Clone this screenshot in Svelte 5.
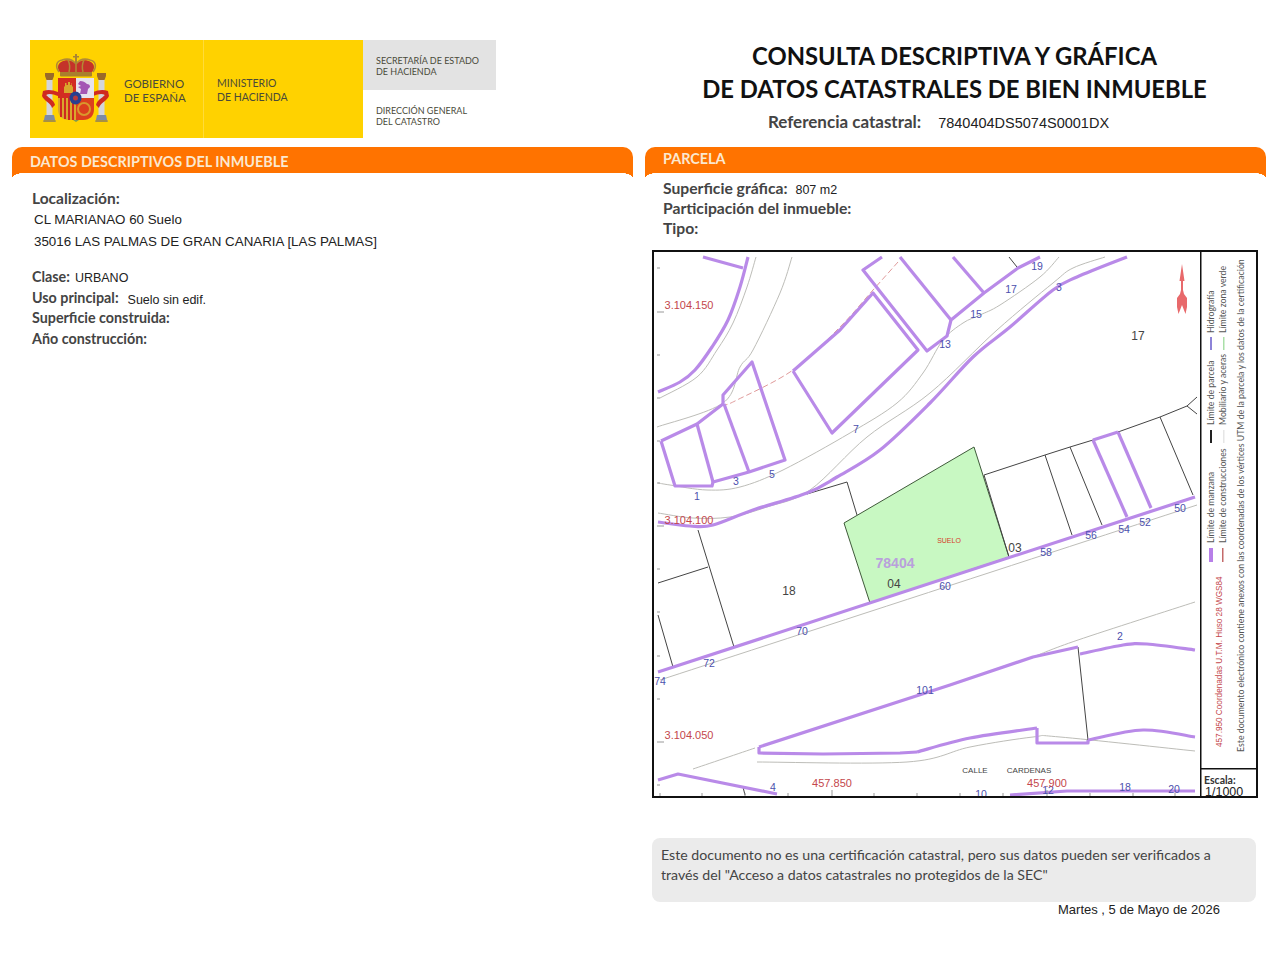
<script>
  const left = [
    { label: 'Clase:', value: 'URBANO', cls: 'clase' },
    { label: 'Uso principal:', value: 'Suelo sin edif.', cls: 'uso' },
    { label: 'Superficie construida:' },
    { label: 'Año construcción:' }
  ];

  // catmull-rom through the traced points, for roads and curved kerbs
  function smooth(str) {
    const p = str.split(' ').map((s) => s.split(',').map(Number));
    let d = `M${p[0][0]} ${p[0][1]}`;
    for (let i = 0; i < p.length - 1; i++) {
      const a = p[i - 1] || p[i];
      const b = p[i];
      const c = p[i + 1];
      const e = p[i + 2] || c;
      const c1x = b[0] + (c[0] - a[0]) / 6;
      const c1y = b[1] + (c[1] - a[1]) / 6;
      const c2x = c[0] - (e[0] - b[0]) / 6;
      const c2y = c[1] - (e[1] - b[1]) / 6;
      d += `C${c1x.toFixed(1)} ${c1y.toFixed(1)} ${c2x.toFixed(1)} ${c2y.toFixed(1)} ${c[0]} ${c[1]}`;
    }
    return d;
  }

  // map traced in page coordinates (the viewBox starts at the frame corner)
  const purple = [
    '703,257 743,268',
    '793,371 840,330 873,293 918,350 832,433 793,371',
    '882,257 863,270 927,351 947,336 951,320 984,293 1018,268 1040,257',
    '900,257 951,320',
    '953,257 984,293',
    '661,441 697,424 723,404 723,395 752,362 785,460 749,472 713,482 712,486 675,486 661,441',
    '697,424 713,482',
    '724,404 749,472',
    '658,672 1195,497',
    '1093,440 1127,517',
    '1118,432 1151,508',
    '1093,440 1118,432',
    '759,747 950,685 1033,657 1078,647',
    '759,747 759,753 823,754 900,753 917,752',
    '1037,728 1037,743 1088,743 1088,740',
    '658,780 678,774 777,794',
    '1010,795 1067,791 1195,791'
  ];
  const purpleCurves = [
    '748,257 740,287 728,320 712,347 695,370 680,382 658,392',
    '1127,257 1077,277 1053,290 1010,327 973,357 930,403 880,450 837,477 807,493 753,510 713,525 690,526 658,522',
    '1080,654 1123,645 1147,644 1195,650',
    '917,752 970,738 1037,728',
    '1088,740 1143,730 1195,737'
  ];
  const gray = [
    '756,257 747,287 733,323 717,350 697,377 660,398',
    '792,257 780,293 753,350 740,367 723,403 657,427',
    '1059,257 1040,277 1000,305 980,315 963,323 943,340 923,373 897,403 850,433 783,470 740,487 707,490 670,485 658,483',
    '1105,257 1073,268 1053,283 997,330 930,393 867,437 810,490 767,507 730,517 693,518 658,513',
    '660,680 1197,505',
    '693,769 755,748',
    '1033,657 1078,640 1195,602',
    '757,762 907,762 970,747 1033,737 1060,737 1195,751'
  ];
  const black = [
    '807,494 847,482 857,515',
    '1009,257 1017,267',
    '698,530 734,647',
    '708,567 658,583',
    '658,615 673,667',
    '1009,557 984,475 1045,455 1070,447 1093,440',
    '1118,432 1160,417 1187,406 1197,397',
    '1187,406 1197,414',
    '1045,455 1072,535',
    '1070,447 1102,525',
    '1160,417 1193,495',
    '1078,647 1088,740',
    '743,787 745,795'
  ];
  const parcel = '844,523 974,447 1009,557 870,603';

  const labels = [
    ['19', 1037, 270], ['17', 1011, 293], ['15', 976, 318], ['13', 945, 348], ['3', 1059, 291],
    ['7', 856, 433], ['5', 772, 478], ['3', 736, 485], ['1', 697, 500], ['60', 945, 590], ['58', 1046, 556],
    ['56', 1091, 539], ['54', 1124, 533], ['52', 1145, 526], ['50', 1180, 512], ['70', 802, 635],
    ['72', 709, 667], ['74', 660, 685], ['101', 925, 694], ['2', 1120, 640], ['4', 773, 791],
    ['10', 981, 798], ['12', 1048, 794], ['18', 1125, 791], ['20', 1174, 793]
  ];
  const numbers = [
    ['17', 1138, 340], ['18', 789, 595], ['04', 894, 588], ['03', 1015, 552]
  ];
  const coords = [
    ['3.104.150', 689, 309], ['3.104.100', 689, 524], ['3.104.050', 689, 739],
    ['457.850', 832, 787], ['457.900', 1047, 787]
  ];

  const yTicks = [268, 312, 355, 398, 441, 483, 526, 569, 612, 656, 699, 742, 785];
  const xTicks = [660, 702, 745, 788, 832, 874, 917, 960, 1003, 1047, 1090, 1133, 1175];
</script>

<div class="page">
  <header class="top">
    <div class="logo">
      <div class="yellow">
        <div class="gov">
          <svg class="arms" viewBox="0 5 100 98" width="100" height="98" aria-hidden="true">
            <!-- columns -->
            <rect x="16.500" y="44" width="6" height="36" fill="#d3d5dc" />
            <rect x="68.500" y="44" width="6" height="36" fill="#d3d5dc" />
            <path d="M15 38h9v3l-1.500 4h-6L15 41zM67 38h9v3l-1.500 4h-6L67 41z" fill="#9a6a2a" />
            <path d="M15 80h9l1.500 7h-12zM67 80h9l1.500 7h-12z" fill="#7d8ba6" />
            <path d="M13.500 85h12v2h-12zM65.500 85h12v2h-12z" fill="#a69045" />
            <!-- ribbons -->
            <path d="M13 56c5-2 10-1 15 1v4c-5-2-9-3-12-1 3 3 8 5 9 10l-3 3c-1-5-8-7-10-12z" fill="#cf2a20" />
            <path d="M78 56c-5-2-10-1-15 1v4c5-2 9-3 12-1-3 3-8 5-9 10l3 3c1-5 8-7 10-12z" fill="#cf2a20" />
            <!-- crown -->
            <path d="M31 38c-4-3-4-9 0-11 5-3 11-2 15 2 4-4 10-5 15-2 4 2 4 8 0 11z" fill="#c4332a" />
            <path d="M29 37c-4-5-3-11 3-12 6-2 11 0 14 4 3-4 8-6 14-4 6 1 7 7 3 12M38 25c2 4 2 8 1 12M54 25c-2 4-2 8-1 12M46 29v8" fill="none" stroke="#b28a35" stroke-width="1.500" />
            <path d="M45 19h2v2h2v1.500h-2v6h-2v-6h-2V21h2z" fill="#a88433" />
            <rect x="30" y="37" width="32" height="4.500" rx="1" fill="#a97f2c" />
            <!-- shield -->
            <path d="M28 43h18v20H28z" fill="#d22c22" />
            <path d="M46 43h18v20H46z" fill="#e6e3ee" />
            <path d="M28 63h18v22h-7c-7 0-11-4-11-11z" fill="#d9a72c" />
            <path d="M31 63v19M35 63v21M39 63v22M43 63v22" stroke="#cf2a20" stroke-width="2" />
            <path d="M46 63h18v11c0 7-4 11-11 11h-7z" fill="#dc3f1e" />
            <circle cx="54" cy="74" r="6" fill="none" stroke="#d9982c" stroke-width="2" />
            <path d="M34 58v-6l1-1v-3h1.500v2h1.500v-3h2v3h1.500v-2H42v3l1 1v6z" fill="#d9a72c" />
            <path d="M50 46c3 0 5 1 7 3 2 0 3 1 3 3l-2 2-1 5h-7l1-5-3-2 3-1-3-2z" fill="#a457b4" />
            <ellipse cx="45.500" cy="63" rx="6" ry="6.500" fill="#27408f" />
            <circle cx="45.500" cy="63" r="2.500" fill="#b8393c" />
            <path d="M43 85h6l-3 2z" fill="#7f9a52" />
          </svg>
          <p>GOBIERNO<br />DE ESPAÑA</p>
        </div>
        <div class="min">
          <p>MINISTERIO<br />DE HACIENDA</p>
        </div>
      </div>
      <div class="side">
        <p class="sec">SECRETARÍA DE ESTADO<br />DE HACIENDA</p>
        <p class="dir">DIRECCIÓN GENERAL<br />DEL CATASTRO</p>
      </div>
    </div>

    <div class="title">
      <h1>CONSULTA DESCRIPTIVA Y GRÁFICA<br />DE DATOS CATASTRALES DE BIEN INMUEBLE</h1>
      <div class="ref"><b>Referencia catastral:</b><span>7840404DS5074S0001DX</span></div>
    </div>
  </header>

  <div class="cols">
    <section class="col">
      <h2 class="band band-left">DATOS DESCRIPTIVOS DEL INMUEBLE</h2>
      <div class="loc">
        <b>Localización:</b>
        <span>CL MARIANAO 60 Suelo</span>
        <span>35016 LAS PALMAS DE GRAN CANARIA [LAS PALMAS]</span>
      </div>
      <div class="fields">
        {#each left as row}
          <div class="field">
            <b>{row.label}</b>
            {#if row.value}<span class={row.cls}>{row.value}</span>{/if}
          </div>
        {/each}
      </div>
    </section>

    <section class="col">
      <h2 class="band band-right">PARCELA</h2>
      <div class="parcel-info">
        <div class="field"><b>Superficie gráfica:</b><span class="sup">807 m2</span></div>
        <div class="field"><b>Participación del inmueble:</b></div>
        <div class="field"><b>Tipo:</b></div>
      </div>

      <svg class="map" viewBox="652 250 606 548" width="606" height="548" role="img" aria-label="Plano catastral">
        <polygon points={parcel} fill="#c8f8c2" stroke="#3f5a3a" stroke-width="1" />

        {#each gray as p}<path d={smooth(p)} class="gray" />{/each}
        <path d={smooth('898,262 873,290 840,327 793,370 737,400 725,405')} class="dash" />
        {#each black as p}<polyline points={p} class="black" />{/each}
        {#each purple as p}<polyline points={p} class="purple" />{/each}
        {#each purpleCurves as p}<path d={smooth(p)} class="purple" />{/each}

        {#each yTicks as y}<line x1="657" x2={y === 312 || y === 526 || y === 742 ? 664 : 660} y1={y} y2={y} class="tick" />{/each}
        {#each xTicks as x}<line x1={x} x2={x} y1={x === 832 || x === 1047 ? 790 : 793} y2="796" class="tick" />{/each}

        {#each labels as [t, x, y]}<text {x} {y} class="lbl">{t}</text>{/each}
        {#each numbers as [t, x, y]}<text {x} {y} class="num">{t}</text>{/each}
        {#each coords as [t, x, y]}<text {x} {y} class="coord">{t}</text>{/each}
        <text x="895" y="568" class="block">78404</text>
        <text x="949" y="543" class="suelo">SUELO</text>
        <text x="975" y="773" class="street">CALLE</text>
        <text x="1029" y="773" class="street">CARDENAS</text>

        <!-- north arrow -->
        <path d="M1182 264l2.500 17h-1.500v9l1 4 3 4v9l-1.500 7-3.500-9-3.500 9-1.500-7v-9l3-4 1-4v-9h-1.500z" fill="#e8696b" />

        <!-- legend -->
        <rect x="1200" y="251" width="1.500" height="545" fill="#111" />
        <rect x="1201" y="768" width="55" height="1.500" fill="#111" />
        <rect x="1209" y="548" width="4" height="14" fill="#b77fe8" />
        <rect x="1222" y="548" width="1.500" height="14" fill="#c46a6a" />
        <rect x="1210" y="430" width="2" height="13" fill="#222" />
        <rect x="1223" y="430" width="1.500" height="13" fill="#e6e6e6" />
        <rect x="1210" y="337" width="2" height="13" fill="#8d83d8" />
        <rect x="1223" y="337" width="1.500" height="13" fill="#a9dfa8" />
        <text transform="translate(1214 543) rotate(-90)" class="leg">Límite de manzana</text>
        <text transform="translate(1226 543) rotate(-90)" class="leg">Límite de construcciones</text>
        <text transform="translate(1214 425) rotate(-90)" class="leg">Límite de parcela</text>
        <text transform="translate(1226 425) rotate(-90)" class="leg">Mobiliario y aceras</text>
        <text transform="translate(1214 333) rotate(-90)" class="leg">Hidrografía</text>
        <text transform="translate(1226 333) rotate(-90)" class="leg">Límite zona verde</text>
        <text transform="translate(1222 747) rotate(-90)" class="utm">457.950  Coordenadas U.T.M. Huso 28 WGS84</text>
        <text transform="translate(1244 752) rotate(-90)" class="leg-long">Este documento electrónico contiene anexos con las coordenadas de los vértices UTM de la parcela y los datos de la certificación</text>
        <text x="1204" y="784" class="esc">Escala:</text>
        <text x="1205" y="796" class="scale">1/1000</text>

        <rect x="653" y="251" width="604" height="546" fill="none" stroke="#111" stroke-width="2" />
      </svg>

      <p class="note">Este documento no es una certificación catastral, pero sus datos pueden ser verificados a través del "Acceso a datos catastrales no protegidos de la SEC"</p>
      <p class="date">Martes , 5 de Mayo de 2026</p>
    </section>
  </div>
</div>

<style>
  :global(body) {
    margin: 0;
    background: #fff;
  }

  .page {
    width: 1280px;
    height: 960px;
    box-sizing: border-box;
    padding-top: 40px;
    overflow: hidden;
    font-family: Lato, "Liberation Sans", sans-serif;
    color: #444;
  }

  p, h1, h2 {
    margin: 0;
  }

  .top {
    display: grid;
    grid-template-columns: 633px 621px;
    gap: 12px;
    height: 107px;
  }

  .logo {
    display: flex;
    margin-left: 30px;
    height: 98px;
    color: #4a4a3a;
  }

  .yellow {
    display: flex;
    width: 333px;
    background: #ffd200;
  }

  .gov {
    display: flex;
    align-items: center;
    width: 174px;
    border-right: 1px solid #ffdb3a;
    box-sizing: border-box;
  }

  .arms {
    filter: blur(0.3px);
  }

  .gov p, .min p {
    font-size: 11.500px;
    line-height: 13.500px;
    margin-top: 3px;
  }

  .gov p {
    margin-left: -6px;
  }

  .min {
    display: flex;
    align-items: center;
    padding-left: 13px;
  }

  .min p {
    font-size: 10.500px;
  }

  .side {
    width: 133px;
    font-size: 9px;
    line-height: 11px;
  }

  .sec {
    height: 50px;
    box-sizing: border-box;
    padding: 15px 0 0 13px;
    background: #e3e3e3;
  }

  .dir {
    padding: 14.500px 0 0 13px;
  }

  .title {
    text-align: center;
    color: #111;
  }

  h1 {
    font-size: 23.800px;
    line-height: 33px;
    font-weight: 700;
    margin-right: 2px;
  }

  .ref {
    display: flex;
    justify-content: center;
    gap: 17px;
    align-items: baseline;
    margin: 5px 34px 0 0;
    color: #444;
  }

  .ref b {
    font-size: 17px;
  }

  .ref span {
    font-family: "Liberation Sans", sans-serif;
    font-size: 14.500px;
    color: #222;
  }

  .cols {
    display: grid;
    grid-template-columns: 621px 621px;
    gap: 12px;
    margin-left: 12px;
  }

  .band {
    position: relative;
    height: 26px;
    box-sizing: border-box;
    background: #ff7300;
    color: #fbe8d0;
    border-radius: 10px 10px 0 0;
    font-size: 14.400px;
    font-weight: 700;
  }

  .band::before, .band::after {
    content: "";
    position: absolute;
    top: 100%;
    width: 12px;
    height: 5px;
  }

  .band::before {
    left: 0;
    background: radial-gradient(ellipse 12px 5px at 100% 100%, transparent 97%, #ff7300 100%);
  }

  .band::after {
    right: 0;
    background: radial-gradient(ellipse 12px 5px at 0 100%, transparent 97%, #ff7300 100%);
  }

  .band-left {
    padding: 6px 0 0 18px;
  }

  .band-right {
    padding: 3px 0 0 18px;
  }

  .loc {
    display: flex;
    flex-direction: column;
    margin: 16px 0 0 20px;
  }

  b {
    font-weight: 700;
    font-size: 14.300px;
    color: #444;
  }

  .loc b {
    font-size: 15.500px;
    margin-bottom: 2px;
  }

  .loc span {
    font-family: "Liberation Sans", sans-serif;
    font-size: 13.350px;
    line-height: 22px;
    margin-left: 2px;
    color: #222;
  }

  .fields {
    margin: 14px 0 0 20px;
  }

  .field {
    display: flex;
    align-items: baseline;
    height: 20.500px;
    line-height: 20.500px;
    gap: 5px;
  }

  .field span {
    font-family: "Liberation Sans", sans-serif;
    font-size: 12.500px;
    color: #222;
  }

  .uso {
    margin-left: 4px;
    position: relative;
    top: 1px;
  }

  .parcel-info {
    height: 62px;
    margin: 5px 0 0 18px;
  }

  .parcel-info .field {
    height: 20px;
    line-height: 20px;
  }

  .parcel-info b {
    font-size: 15.700px;
  }

  .sup {
    margin-left: 3px;
  }

  .map {
    display: block;
    margin: 10px 0 0 7px;
  }

  .purple {
    fill: none;
    stroke: #b98ae8;
    stroke-width: 3.200;
    stroke-linejoin: round;
  }

  .gray {
    fill: none;
    stroke: #bdbdb8;
    stroke-width: 1;
  }

  .black {
    fill: none;
    stroke: #444;
    stroke-width: 1;
  }

  .dash {
    fill: none;
    stroke: #e09a9a;
    stroke-width: 1;
    stroke-dasharray: 6 3;
  }

  .tick {
    stroke: #999;
    stroke-width: 1;
  }

  text {
    font-family: "Liberation Sans", sans-serif;
  }

  .lbl {
    font-size: 10.500px;
    fill: #4c50ad;
    text-anchor: middle;
  }

  .num {
    font-size: 12px;
    fill: #444;
    text-anchor: middle;
  }

  .coord {
    font-size: 11px;
    fill: #c4474c;
    text-anchor: middle;
  }

  .block {
    font-size: 14px;
    font-weight: 700;
    fill: #b9a0dc;
    text-anchor: middle;
  }

  .suelo {
    font-size: 7px;
    fill: #d6402a;
    text-anchor: middle;
  }

  .street {
    font-size: 8px;
    fill: #444;
    text-anchor: middle;
  }

  .leg, .leg-long {
    font-family: Lato, sans-serif;
    fill: #555;
  }

  .leg {
    font-size: 8.700px;
  }

  .leg-long {
    font-size: 8.750px;
  }

  .utm {
    font-size: 8.200px;
    fill: #c4474c;
  }

  .esc {
    font-family: Lato, sans-serif;
    font-size: 10.500px;
    font-weight: 700;
    fill: #333;
  }

  .scale {
    font-size: 12.500px;
    fill: #222;
  }

  .note {
    width: 604px;
    height: 64px;
    box-sizing: border-box;
    margin: 40px 0 0 7px;
    padding: 7px 9px;
    border-radius: 8px;
    background: #ebebeb;
    font-size: 14.170px;
    line-height: 19.500px;
    color: #444;
  }

  .date {
    margin: 1px 0 0 413px;
    font-family: "Liberation Sans", sans-serif;
    font-size: 13px;
    line-height: 14px;
    color: #222;
  }
</style>
